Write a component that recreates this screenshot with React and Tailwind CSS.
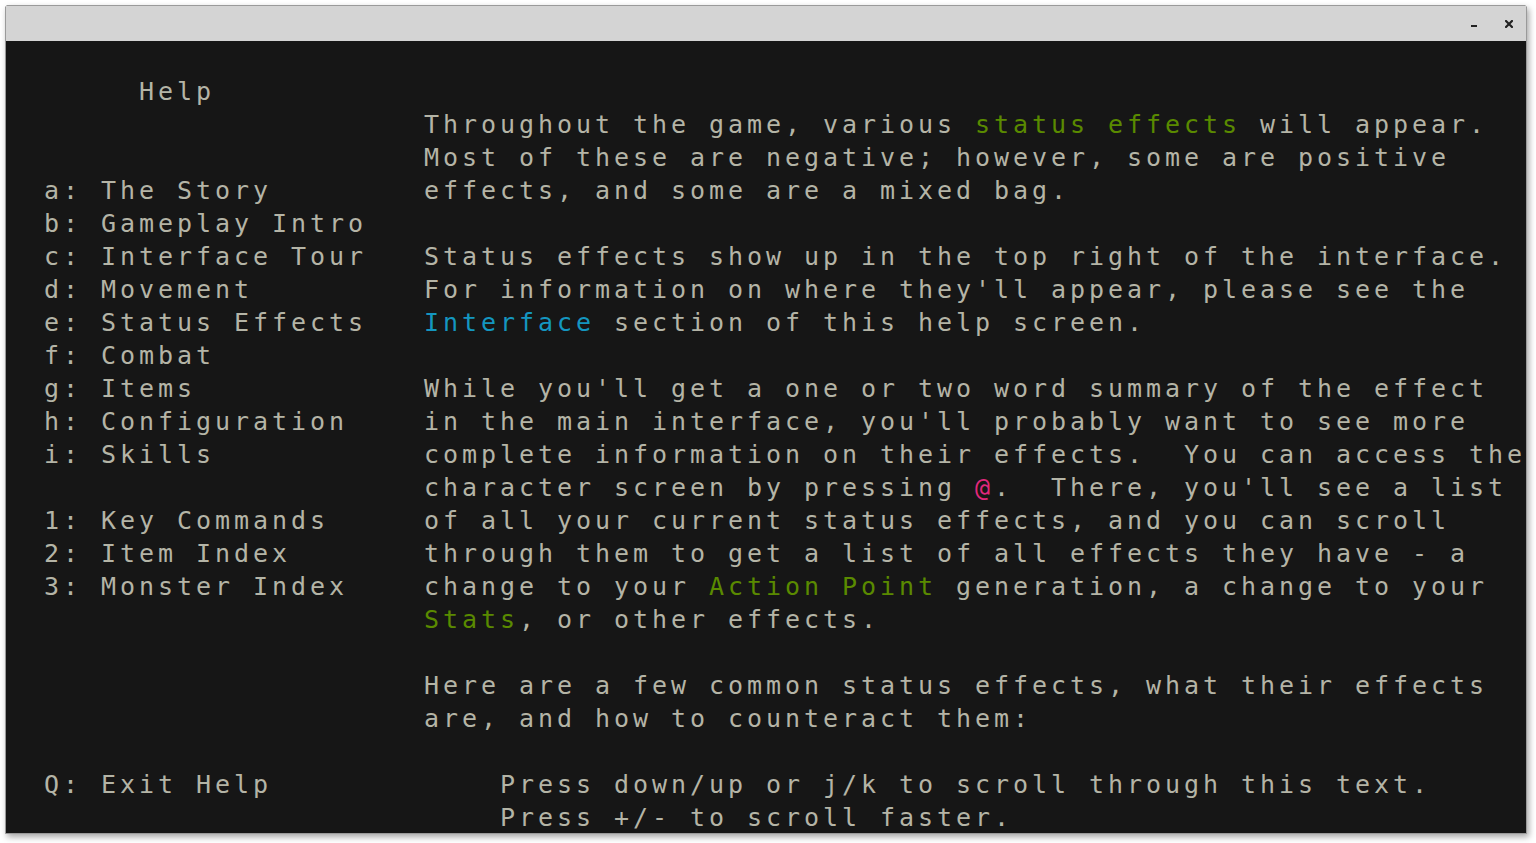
import React from "react";

const G = ({ children }) => <span className="text-[#5a8a00]">{children}</span>;
const C = ({ children }) => <span className="text-[#1496c0]">{children}</span>;
const P = ({ children }) => <span className="text-[#e0287c]">{children}</span>;

const leftLines = [
  "     Help",
  "",
  "",
  "a: The Story",
  "b: Gameplay Intro",
  "c: Interface Tour",
  "d: Movement",
  "e: Status Effects",
  "f: Combat",
  "g: Items",
  "h: Configuration",
  "i: Skills",
  "",
  "1: Key Commands",
  "2: Item Index",
  "3: Monster Index",
];

const rightLines = [
  "",
  <>Throughout the game, various <G>status effects</G> will appear.</>,
  "Most of these are negative; however, some are positive",
  "effects, and some are a mixed bag.",
  "",
  "Status effects show up in the top right of the interface.",
  "For information on where they'll appear, please see the",
  <><C>Interface</C> section of this help screen.</>,
  "",
  "While you'll get a one or two word summary of the effect",
  "in the main interface, you'll probably want to see more",
  "complete information on their effects.  You can access the",
  <>character screen by pressing <P>@</P>.  There, you'll see a list</>,
  "of all your current status effects, and you can scroll",
  "through them to get a list of all effects they have - a",
  <>change to your <G>Action Point</G> generation, a change to your</>,
  <><G>Stats</G>, or other effects.</>,
  "",
  "Here are a few common status effects, what their effects",
  "are, and how to counteract them:",
  "",
];

function Line({ children }) {
  return <div className="h-[33px] whitespace-pre">{children}</div>;
}

export default function App() {
  return (
    <div className="w-full h-[843px] bg-white pl-[5px] pt-[5px] overflow-hidden">
      <div className="w-[1522px] border border-[#9a9a9a] rounded-t-[3px] bg-[#161616] shadow-[2px_3px_6px_rgba(0,0,0,0.35)]">
        <div className="h-[35px] bg-[#d4d4d4] flex items-start justify-end pr-[13px]">
          <svg width="6" height="2" className="mt-[19px]" viewBox="0 0 6 2">
            <rect x="0" y="0" width="6" height="2" fill="#222" />
          </svg>
          <svg width="8" height="8" className="mt-[14px] ml-[28px]" viewBox="0 0 8 8">
            <path d="M1 1L7 7M7 1L1 7" stroke="#222" strokeWidth="2.2" strokeLinecap="square" />
          </svg>
        </div>
        <div className="h-[792px] overflow-hidden pt-[1px] pl-[38px] text-[#b4b4a6] font-['DejaVu_Sans_Mono',monospace] text-[25px] leading-[33px] tracking-[3.949px]">
          <Line />
          <div className="flex h-[693px]">
            <div className="w-[380px] flex flex-col">
              {leftLines.map((l, i) => (
                <Line key={i}>{l}</Line>
              ))}
            </div>
            <div className="flex flex-col">
              {rightLines.map((l, i) => (
                <Line key={i}>{l}</Line>
              ))}
            </div>
          </div>
          <div className="flex">
            <div className="w-[456px]">
              <Line>Q: Exit Help</Line>
            </div>
            <div className="flex flex-col">
              <Line>Press down/up or j/k to scroll through this text.</Line>
              <Line>Press +/- to scroll faster.</Line>
            </div>
          </div>
        </div>
      </div>
    </div>
  );
}
